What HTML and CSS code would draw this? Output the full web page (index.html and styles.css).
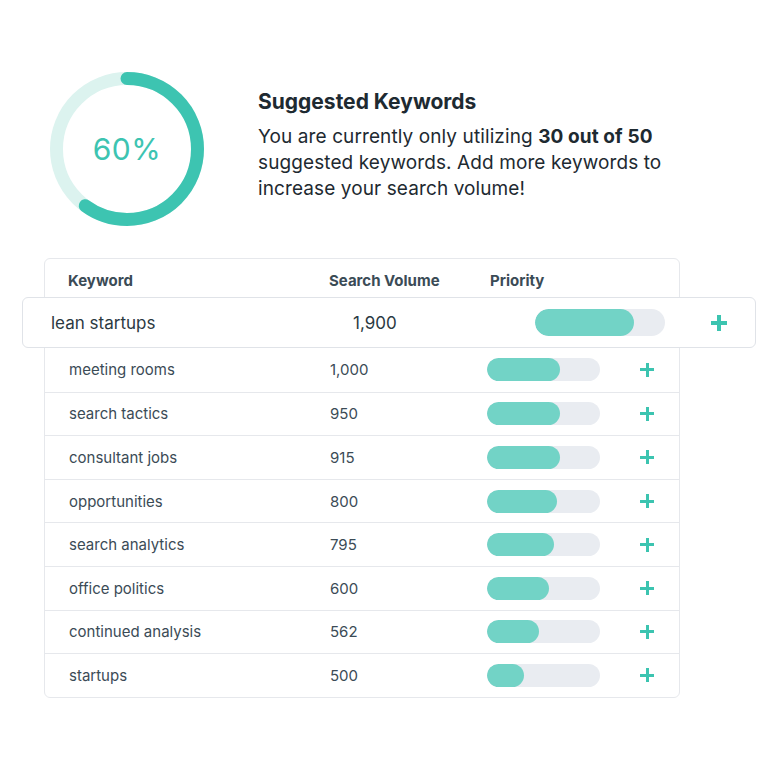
FILE: index.html
```html
<!DOCTYPE html>
<html lang="en">
<head>
  <meta charset="UTF-8">
  <title>Suggested Keywords</title>
  <link rel="stylesheet" href="styles.css">
</head>
<body>

  <!-- Summary -->
  <div class="summary">
    <div class="ring">
      <svg width="156" height="156" viewBox="0 0 156 156">
        <circle class="ring-track" cx="78" cy="78" r="70.5"></circle>
        <circle class="ring-fill" cx="78" cy="78" r="70.5" stroke-dasharray="265.8 443" transform="rotate(-90 78 78)"></circle>
      </svg>
      <span class="ring-label">60%</span>
    </div>
    <div class="summary-text">
      <h2>Suggested Keywords</h2>
      <p>You are currently only utilizing <b>30 out of 50</b> suggested keywords. Add more keywords to increase your search volume!</p>
    </div>
  </div>

  <!-- Keywords table -->
  <div class="table">
    <div class="table-head">
      <span>Keyword</span>
      <span>Search Volume</span>
      <span class="head-priority">Priority</span>
    </div>

    <div class="row row-active">
      <span class="kw">lean startups</span>
      <span class="vol">1,900</span>
      <span class="bar"><span class="bar-fill" style="width: 76%"></span></span>
      <span class="plus"></span>
    </div>

    <div class="row">
      <span class="kw">meeting rooms</span>
      <span class="vol">1,000</span>
      <span class="bar"><span class="bar-fill" style="width: 65%"></span></span>
      <span class="plus"></span>
    </div>
    <div class="row">
      <span class="kw">search tactics</span>
      <span class="vol">950</span>
      <span class="bar"><span class="bar-fill" style="width: 65%"></span></span>
      <span class="plus"></span>
    </div>
    <div class="row">
      <span class="kw">consultant jobs</span>
      <span class="vol">915</span>
      <span class="bar"><span class="bar-fill" style="width: 65%"></span></span>
      <span class="plus"></span>
    </div>
    <div class="row">
      <span class="kw">opportunities</span>
      <span class="vol">800</span>
      <span class="bar"><span class="bar-fill" style="width: 62%"></span></span>
      <span class="plus"></span>
    </div>
    <div class="row">
      <span class="kw">search analytics</span>
      <span class="vol">795</span>
      <span class="bar"><span class="bar-fill" style="width: 59%"></span></span>
      <span class="plus"></span>
    </div>
    <div class="row">
      <span class="kw">office politics</span>
      <span class="vol">600</span>
      <span class="bar"><span class="bar-fill" style="width: 55%"></span></span>
      <span class="plus"></span>
    </div>
    <div class="row">
      <span class="kw">continued analysis</span>
      <span class="vol">562</span>
      <span class="bar"><span class="bar-fill" style="width: 46%"></span></span>
      <span class="plus"></span>
    </div>
    <div class="row">
      <span class="kw">startups</span>
      <span class="vol">500</span>
      <span class="bar"><span class="bar-fill" style="width: 33%"></span></span>
      <span class="plus"></span>
    </div>
  </div>

</body>
</html>
```

FILE: styles.css
```css
* {
  margin: 0;
  padding: 0;
  box-sizing: border-box;
}

body {
  font-family: 'Inter', 'Noto Sans', sans-serif;
  background-color: #fff;
  color: #1e2a31;
}

/* Summary */
.summary {
  display: flex;
  align-items: flex-start;
  padding: 71px 0 0 49px;
}

.ring {
  position: relative;
  width: 156px;
  height: 156px;
}

.ring svg {
  display: block;
}

.ring-track {
  fill: none;
  stroke: #dcf3ef;
  stroke-width: 13;
}

.ring-fill {
  fill: none;
  stroke: #3dc4b1;
  stroke-width: 13;
  stroke-linecap: round;
}

.ring-label {
  position: absolute;
  top: 0;
  left: 0;
  right: 0;
  bottom: 0;
  display: flex;
  align-items: center;
  justify-content: center;
  font-size: 30px;
  color: #3dc4b1;
  letter-spacing: 0.5px;
}

.summary-text {
  margin-left: 53px;
  padding-top: 18px;
}

.summary-text h2 {
  font-size: 21px;
  font-weight: 700;
  line-height: 26px;
  color: #1e2a31;
}

.summary-text p {
  margin-top: 9px;
  width: 425px;
  font-size: 19px;
  line-height: 26px;
  letter-spacing: 0.1px;
}

/* Table */
.table {
  width: 636px;
  margin: 31px 0 0 44px;
  border: 1px solid #e6e8ec;
  border-radius: 6px;
}

.table-head,
.row {
  display: grid;
  grid-template-columns: 261px 157px 113px 14px;
  align-items: center;
  padding-left: 23px;
}

.table-head {
  height: 38px;
  padding-top: 4px;
  font-size: 15px;
  font-weight: 700;
  color: #3b4b56;
}

.head-priority {
  padding-left: 4px;
}

.row {
  height: 43.6px;
  padding-left: 24px;
  font-size: 15px;
  color: #3b4b56;
  border-top: 1px solid #e6e8ec;
}

.row .plus {
  margin-left: 40px;
}

.row-active + .row {
  border-top: none;
}

.row-active {
  grid-template-columns: 302px 182px 130px 16px;
  height: 51px;
  margin: 0 -77px 0 -23px;
  padding-left: 28px;
  background-color: #fff;
  border: 1px solid #e0e3e8;
  border-radius: 6px;
  font-size: 17px;
  color: #2b3942;
}

.bar {
  display: block;
  height: 23px;
  background-color: #e9ecf1;
  border-radius: 12px;
  overflow: hidden;
}

.bar-fill {
  display: block;
  height: 100%;
  background-color: #72d3c6;
  border-radius: 12px;
}

.row-active .bar {
  height: 27px;
  border-radius: 14px;
}

.row-active .bar-fill {
  border-radius: 14px;
}

/* Plus icon */
.plus {
  position: relative;
  display: block;
  width: 14px;
  height: 14px;
}

.plus::before,
.plus::after {
  content: '';
  position: absolute;
  background-color: #3cc4b0;
}

.plus::before {
  left: 0;
  right: 0;
  top: 5.5px;
  height: 3px;
}

.plus::after {
  top: 0;
  bottom: 0;
  left: 5.5px;
  width: 3px;
}

.row-active .plus {
  width: 16px;
  height: 16px;
  margin-left: 46px;
}

.row-active .plus::before {
  top: 6px;
  height: 4px;
}

.row-active .plus::after {
  left: 6px;
  width: 4px;
}
```
